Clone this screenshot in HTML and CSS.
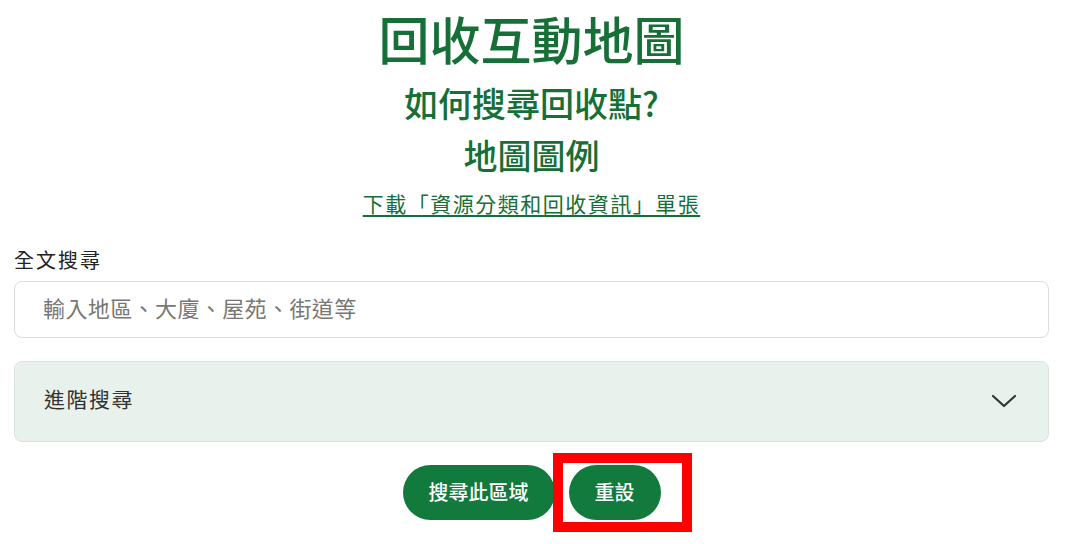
FILE: index.html
```html
<!DOCTYPE html>
<html>
	<head>
		<meta charset="UTF-8">
		<title>回收互動地圖</title>
		<link rel="stylesheet" href="styles.css">
	</head>
	<body>
		<div class="page">
			<div class="heading">
				<h1 class="title">回收互動地圖</h1>
				<h2 class="sub">如何搜尋回收點?</h2>
				<h2 class="sub sub-legend">地圖圖例</h2>
				<a class="leaflet" href="#">下載「資源分類和回收資訊」單張</a>
			</div>

			<label class="label" for="keyword">全文搜尋</label>
			<input class="search-input" id="keyword" type="text" placeholder="輸入地區、大廈、屋苑、街道等">

			<div class="advanced">
				<span class="advanced-text">進階搜尋</span>
				<svg class="chevron" width="26" height="16" viewBox="0 0 26 16">
					<polyline points="2,3 13,13 24,3" fill="none" stroke="#333" stroke-width="2.2" stroke-linecap="round" stroke-linejoin="round"/>
				</svg>
			</div>

			<div class="actions">
				<button class="btn">搜尋此區域</button>
				<div class="reset-wrap">
					<button class="btn btn-reset">重設</button>
					<div class="highlight"></div>
				</div>
			</div>
		</div>
	</body>
</html>
```

FILE: styles.css
```css
* {
	margin: 0;
	padding: 0;
	box-sizing: border-box;
}
body {
	background: #fff;
	font-family: "Noto Sans CJK TC", "Noto Sans", sans-serif;
	color: #222;
}
.page {
	width: 1049px;
	padding-left: 14px;
	padding-bottom: 24px;
	display: flex;
	flex-direction: column;
}
.heading {
	display: flex;
	flex-direction: column;
	align-items: center;
	color: #166f36;
}
.title {
	margin-top: 8px;
	font-size: 51px;
	line-height: 61px;
	font-weight: 500;
}
.sub {
	margin-top: 13px;
	font-size: 34px;
	line-height: 41px;
	font-weight: 500;
}
.sub-legend {
	margin-top: 11px;
}
.leaflet {
	margin-top: 15px;
	font-size: 21px;
	line-height: 26px;
	letter-spacing: 1.5px;
	color: #166f36;
	text-decoration: underline;
	text-underline-offset: 3px;
}
.label {
	margin-top: 32px;
	font-size: 20px;
	line-height: 24px;
	letter-spacing: 2px;
	color: #222;
}
.search-input {
	margin-top: 9px;
	height: 57px;
	width: 100%;
	border: 1px solid #dcdcdc;
	border-radius: 8px;
	padding: 0 28px 6px;
	font-family: inherit;
	font-size: 22px;
	letter-spacing: 0.4px;
	outline: none;
}
.search-input::placeholder {
	color: #777;
}
.advanced {
	margin-top: 23px;
	height: 81px;
	display: flex;
	align-items: center;
	justify-content: space-between;
	padding: 0 31px 0 29px;
	background: #e8f1ec;
	border: 1px solid #dbe3de;
	border-radius: 8px;
	font-size: 21px;
	letter-spacing: 1.5px;
	color: #333;
}
.advanced-text {
	margin-bottom: 8px;
}
.chevron {
	display: block;
	margin-bottom: 2px;
}
.actions {
	margin-top: 23px;
	display: flex;
	justify-content: center;
	gap: 14px;
}
.btn {
	display: block;
	height: 55px;
	padding: 0 26px 2px;
	border: none;
	border-radius: 28px;
	background: #117a3c;
	color: #fff;
	font-family: inherit;
	font-size: 20px;
	font-weight: 500;
	cursor: pointer;
}
.reset-wrap {
	position: relative;
}
.highlight {
	position: absolute;
	left: -16px;
	top: -12px;
	right: -31px;
	bottom: -12px;
	border: 10px solid #ff0000;
}
```
